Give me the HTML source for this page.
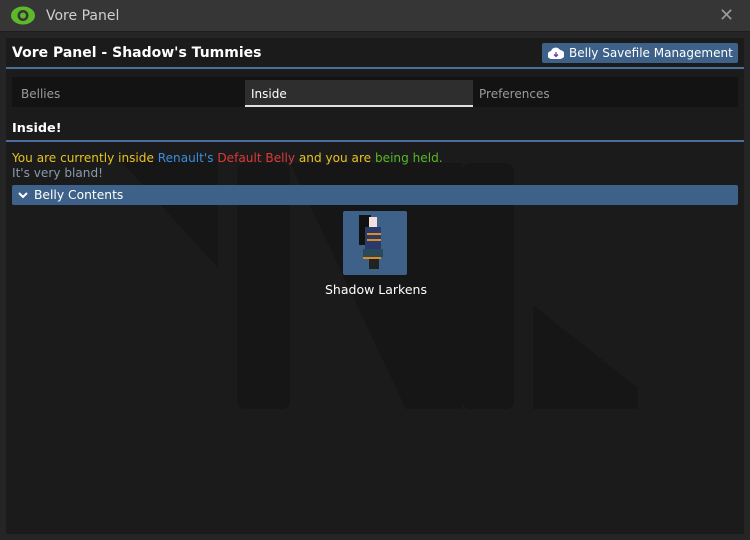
<html><head><style>
body{margin:0;width:750px;height:540px;background:#252525;font-family:"DejaVu Sans","Liberation Sans",sans-serif;font-size:12px;color:#fff;position:relative;overflow:hidden}
.tb{position:absolute;left:0;top:0;width:750px;height:31px;background:#363636;border-bottom:1px solid #1e1e1e}
.tb .t{position:absolute;left:46px;top:8px;font-size:14px;color:#d0d0d0}
.x{position:absolute;left:719px;top:5px;font-size:18px;color:#9a9a9a}
.pn{position:absolute;left:6px;top:38px;width:738px;height:496px;background:#1b1b1b;overflow:hidden}
.a{position:absolute;white-space:nowrap}
</style></head><body>
<div class="tb">
<svg class="a" style="left:11px;top:6px" width="24" height="19" viewBox="0 0 24 19"><ellipse cx="12" cy="9.5" rx="12" ry="9" fill="#5eb92a"/><circle cx="12" cy="9.5" r="5.5" fill="#363636"/><circle cx="12" cy="9.5" r="3" fill="#5eb92a"/></svg>
<div class="t">Vore Panel</div><div class="x">✕</div></div>
<div class="pn">
<svg class="a" style="left:0;top:0" width="738" height="496"><g fill="#161616"><path d="M114 122 L212 122 L212 230 Z"/><rect x="231" y="125" width="53" height="246" rx="8"/><path d="M284 125 L456 125 L456 371 L400 371 Z"/><rect x="456" y="125" width="52" height="246" rx="8"/><path d="M527 267 L632 350 L632 371 L527 371 Z"/></g></svg>
<div class="a" style="left:6px;top:7px;font-weight:bold;font-size:14px">Vore Panel - Shadow's Tummies</div>
<div class="a" style="left:536px;top:5px;width:196px;height:20px;background:#3e6189;border-radius:2px"><svg class="a" style="left:6px;top:4px" width="16" height="12" viewBox="0 0 16 12"><path d="M4 12 A4 4 0 0 1 3 4 A5 5 0 0 1 12 3 A4.5 4.5 0 0 1 12 12Z" fill="#fff"/><path d="M8 5 V9 M6 7.5 L8 9.5 L10 7.5" stroke="#7a3a9a" stroke-width="1.3" fill="none"/></svg><span class="a" style="left:27px;top:3px;font-size:12px">Belly Savefile Management</span></div>
<div class="a" style="left:0;top:29px;width:738px;height:2px;background:#4a6d9a"></div>
<div class="a" style="left:6px;top:39px;width:726px;height:30px;background:#131313"></div>
<div class="a" style="left:239px;top:42px;width:228px;height:25px;background:#2e2e2e;border-bottom:2px solid #e0e0e0"></div>
<div class="a" style="left:15px;top:49px;color:#9a9a9a">Bellies</div>
<div class="a" style="left:245px;top:49px;color:#fff">Inside</div>
<div class="a" style="left:473px;top:49px;color:#9a9a9a">Preferences</div>
<div class="a" style="left:6px;top:83px;font-weight:bold;font-size:12.8px">Inside!</div>
<div class="a" style="left:0;top:102px;width:738px;height:2px;background:#4a6d9a"></div>
<div class="a" style="left:6px;top:113px;color:#e6c21e;font-size:12.1px">You are currently inside <span style="color:#3a8ede">Renault's</span> <span style="color:#db3a3a">Default Belly</span> and you are <span style="color:#56b824">being held.</span></div>
<div class="a" style="left:6px;top:128px;color:#8a9aaa;font-size:12.1px">It's very bland!</div>
<div class="a" style="left:6px;top:147px;width:726px;height:20px;background:#3e6189;border-radius:2px"><svg class="a" style="left:6px;top:6px" width="10" height="8"><path d="M1 2 L5 6 L9 2" stroke="#fff" stroke-width="2" fill="none"/></svg><span class="a" style="left:22px;top:3px;font-size:12.3px">Belly Contents</span></div>
<div class="a" style="left:337px;top:173px;width:64px;height:64px;background:#3e6189;border-radius:2px">
<svg width="64" height="64"><rect x="16" y="4" width="12" height="30" fill="#111"/><rect x="26" y="6" width="8" height="10" fill="#f0e0e0"/><rect x="22" y="16" width="16" height="22" fill="#2a3a6a"/><rect x="24" y="22" width="14" height="2" fill="#e08a20"/><rect x="24" y="28" width="14" height="2" fill="#e08a20"/><rect x="20" y="38" width="20" height="8" fill="#2a4a5a"/><rect x="20" y="46" width="18" height="2" fill="#e08a20"/><rect x="26" y="48" width="10" height="10" fill="#222"/></svg></div>
<div class="a" style="left:319px;top:244px;font-size:12.5px">Shadow Larkens</div>
</div>
</body></html>
